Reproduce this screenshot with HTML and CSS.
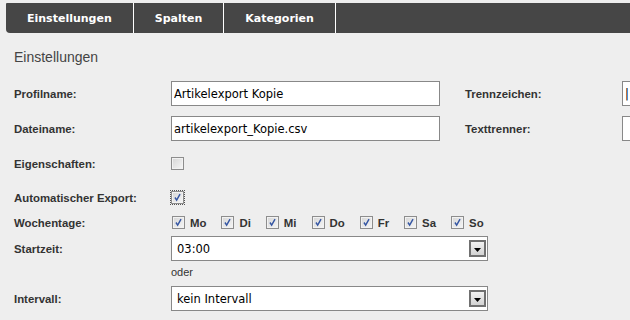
FILE: index.html
```html
<!DOCTYPE html>
<html lang="de">
<head>
  <meta charset="UTF-8">
  <title>Exportprofil</title>
  <link rel="stylesheet" href="styles.css">
</head>
<body>
  <div class="tabs">
    <a class="tab" href="#">Einstellungen</a>
    <a class="tab" href="#">Spalten</a>
    <a class="tab" href="#">Kategorien</a>
  </div>

  <div class="panel">
    <h2 class="panel-title">Einstellungen</h2>

    <div class="row">
      <div class="field">
        <label class="field-label">Profilname:</label>
        <input class="text-input" type="text" value="Artikelexport Kopie">
      </div>
      <div class="field">
        <label class="field-label">Trennzeichen:</label>
        <input class="text-input" type="text" value="|">
      </div>
    </div>

    <div class="row">
      <div class="field">
        <label class="field-label">Dateiname:</label>
        <input class="text-input" type="text" value="artikelexport_Kopie.csv">
      </div>
      <div class="field">
        <label class="field-label">Texttrenner:</label>
        <input class="text-input" type="text" value="">
      </div>
    </div>

    <div class="row check-row">
      <label class="field-label">Eigenschaften:</label>
      <span class="checkbox"></span>
    </div>

    <div class="row tight">
      <label class="field-label">Automatischer Export:</label>
      <span class="checkbox focus">
        <svg viewBox="0 0 13 13"><path d="M3.5 6.5 L5.5 9.5 L9.5 2.5"/></svg>
      </span>
    </div>

    <div class="row small">
      <label class="field-label">Wochentage:</label>
      <div class="days">
        <span class="day"><span class="checkbox"><svg viewBox="0 0 13 13"><path d="M3.5 6.5 L5.5 9.5 L9.5 2.5"/></svg></span>Mo</span>
        <span class="day"><span class="checkbox"><svg viewBox="0 0 13 13"><path d="M3.5 6.5 L5.5 9.5 L9.5 2.5"/></svg></span>Di</span>
        <span class="day"><span class="checkbox"><svg viewBox="0 0 13 13"><path d="M3.5 6.5 L5.5 9.5 L9.5 2.5"/></svg></span>Mi</span>
        <span class="day"><span class="checkbox"><svg viewBox="0 0 13 13"><path d="M3.5 6.5 L5.5 9.5 L9.5 2.5"/></svg></span>Do</span>
        <span class="day"><span class="checkbox"><svg viewBox="0 0 13 13"><path d="M3.5 6.5 L5.5 9.5 L9.5 2.5"/></svg></span>Fr</span>
        <span class="day"><span class="checkbox"><svg viewBox="0 0 13 13"><path d="M3.5 6.5 L5.5 9.5 L9.5 2.5"/></svg></span>Sa</span>
        <span class="day"><span class="checkbox"><svg viewBox="0 0 13 13"><path d="M3.5 6.5 L5.5 9.5 L9.5 2.5"/></svg></span>So</span>
      </div>
    </div>

    <div class="row small">
      <label class="field-label">Startzeit:</label>
      <div class="select">
        <span class="select-value">03:00</span>
        <span class="select-btn"><svg viewBox="0 0 7 4"><path d="M0 0 H7 L3.5 4 Z"/></svg></span>
      </div>
    </div>

    <div class="hint-row">oder</div>

    <div class="row">
      <label class="field-label">Intervall:</label>
      <div class="select">
        <span class="select-value">kein Intervall</span>
        <span class="select-btn"><svg viewBox="0 0 7 4"><path d="M0 0 H7 L3.5 4 Z"/></svg></span>
      </div>
    </div>
  </div>
</body>
</html>
```

FILE: styles.css
```css
/* export profile form */
html, body {
  overflow: hidden;
}

body {
  margin: 0;
  padding: 0;
  background-color: #eeeeee;
  font-family: "Liberation Sans", Arial, sans-serif;
  color: #333;
}

.tabs {
  display: flex;
  height: 30px;
  margin: 3px 0 0 6px;
  background-color: #464646;
  border-radius: 1px 0 0 4px;
}

.tab {
  display: block;
  padding: 2px 21px 0;
  line-height: 28px;
  color: #fff;
  font-family: "DejaVu Sans", Verdana, sans-serif;
  font-size: 11px;
  font-weight: bold;
  text-decoration: none;
  border-right: 1px solid #fff;
}

.panel {
  padding: 0 14px;
}

.panel-title {
  margin: 15px 0 15px;
  height: 18px;
  line-height: 18px;
  font-size: 14px;
  font-weight: normal;
  color: #444;
}

.row {
  display: flex;
  align-items: center;
  height: 25px;
  margin-bottom: 10px;
  white-space: nowrap;
}

.row.check-row {
  margin-bottom: 9px;
}

.row.tight {
  margin-bottom: 0;
}

.row.small {
  margin-bottom: 1px;
}

.field {
  display: flex;
  align-items: center;
  margin-right: 25px;
  flex-shrink: 0;
}

.field-label {
  width: 157px;
  flex-shrink: 0;
  font-size: 11.4px;
  font-weight: bold;
  color: #333;
}

.text-input {
  width: 269px;
  height: 25px;
  box-sizing: border-box;
  margin: 0;
  padding: 0 2px;
  border: 1px solid #888;
  background: #fff;
  font-family: "DejaVu Sans", Verdana, sans-serif;
  font-size: 11.5px;
  color: #000;
  outline: none;
}

/* checkboxes */
.checkbox {
  display: inline-block;
  width: 13px;
  height: 13px;
  box-sizing: border-box;
  border: 1px solid #8d8d8d;
  background: linear-gradient(135deg, #d6d6d6, #f6f6f6);
  box-shadow: inset 0 0 0 1px #f2f2f2;
  flex-shrink: 0;
}

.checkbox svg {
  display: block;
  width: 11px;
  height: 11px;
}

.checkbox path {
  fill: none;
  stroke: #3556a3;
  stroke-width: 1.7;
}

.checkbox.focus {
  outline: 1px dotted #555;
  outline-offset: 0;
}

.days {
  display: flex;
  align-items: center;
  margin-left: 1px;
}

.day {
  display: flex;
  align-items: center;
  margin-right: 15px;
  font-size: 11.4px;
  font-weight: bold;
  color: #333;
}

.day .checkbox {
  margin-right: 5px;
}

/* selects */
.select {
  display: flex;
  align-items: center;
  justify-content: space-between;
  width: 317px;
  height: 25px;
  box-sizing: border-box;
  border: 1px solid #888;
  background: #fff;
  padding: 0 1px 0 5px;
}

.select-value {
  font-family: "DejaVu Sans", Verdana, sans-serif;
  font-size: 11.5px;
  color: #000;
}

.select-btn {
  display: flex;
  align-items: center;
  justify-content: center;
  width: 17px;
  height: 17px;
  box-sizing: border-box;
  border: 2px solid #707070;
  background: linear-gradient(#f2f2f2, #d2d2d2);
}

.select-btn svg {
  width: 7px;
  height: 4px;
  margin-top: 2px;
}

.hint-row {
  height: 20px;
  line-height: 20px;
  margin-bottom: 4px;
  padding-left: 157px;
  font-size: 11px;
  color: #333;
}
```
